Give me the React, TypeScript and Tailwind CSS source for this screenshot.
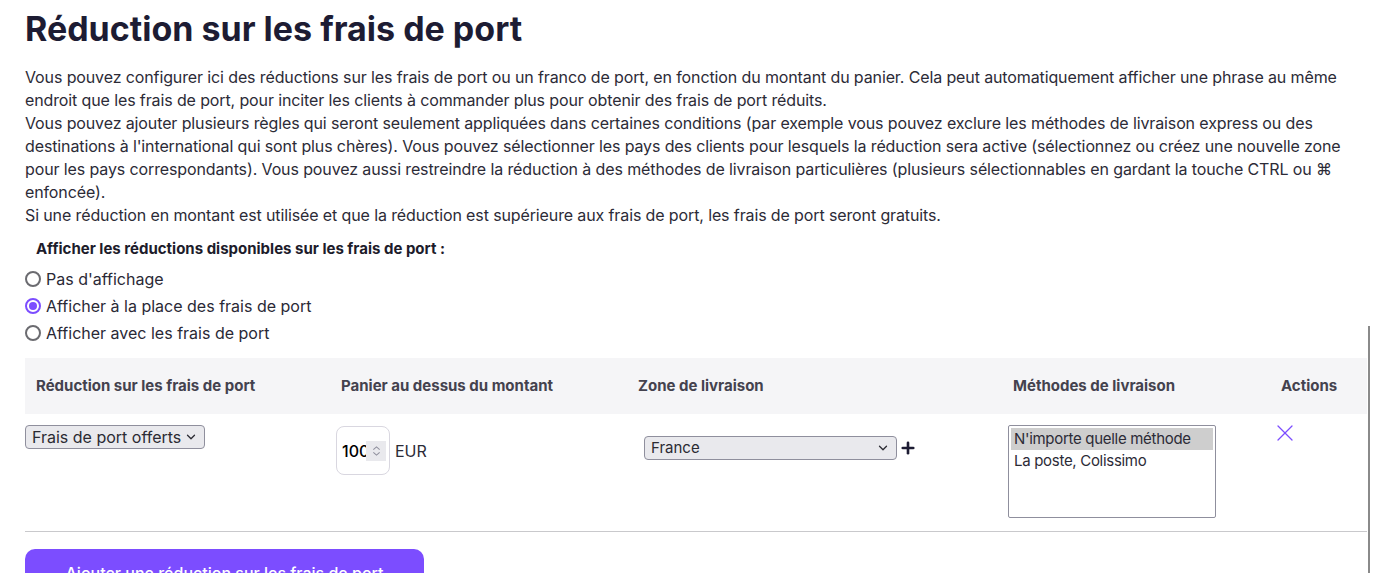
import { X, ChevronDown, Plus } from 'lucide-react';

const fontStack = { fontFamily: 'Inter, "Noto Sans", sans-serif' };

function FakeSelect({ label, className }: { label: string; className: string }) {
  return (
    <div
      className={`flex items-center justify-between bg-[#e9e9ed] border border-[#8f8f9d] rounded-[4px] text-[#2b2b33] ${className}`}
    >
      <span className="truncate">{label}</span>
      <ChevronDown className="w-3.5 h-3.5 shrink-0" strokeWidth={2.2} />
    </div>
  );
}

function Radio({ label, checked }: { label: string; checked?: boolean }) {
  return (
    <label className="flex items-center h-[27px] gap-[5px] text-[16px] text-[#2a2936]">
      <span
        className={`w-[16px] h-[16px] rounded-full border-2 flex items-center justify-center ${
          checked ? 'border-[#7c4dff]' : 'border-[#6b6b70]'
        }`}
      >
        {checked && <span className="w-[8px] h-[8px] rounded-full bg-[#7c4dff]" />}
      </span>
      {label}
    </label>
  );
}

export default function App() {
  return (
    <div className="bg-white min-h-[573px] px-[25px] overflow-hidden" style={fontStack}>
      <h1 className="pt-[6px] text-[34px] leading-[46px] font-bold text-[#1d1c33]">
        Réduction sur les frais de port
      </h1>

      <p className="mt-[14px] text-[16px] leading-[23px] text-[#2c2b37] tracking-[-0.12px]">
        Vous pouvez configurer ici des réductions sur les frais de port ou un franco de port, en fonction du
        montant du panier. Cela peut automatiquement afficher une phrase au même endroit que les frais de port,
        pour inciter les clients à commander plus pour obtenir des frais de port réduits.
        <br />
        Vous pouvez ajouter plusieurs règles qui seront seulement appliquées dans certaines conditions (par
        exemple vous pouvez exclure les méthodes de livraison express ou des destinations à l'international qui
        sont plus chères). Vous pouvez sélectionner les pays des clients pour lesquels la réduction sera active
        (sélectionnez ou créez une nouvelle zone pour les pays correspondants). Vous pouvez aussi restreindre la
        réduction à des méthodes de livraison particulières (plusieurs sélectionnables en gardant la touche CTRL
        ou ⌘ enfoncée).
        <br />
        Si une réduction en montant est utilisée et que la réduction est supérieure aux frais de port, les frais
        de port seront gratuits.
      </p>

      <div className="mt-[12px] pl-[11px] text-[15px] leading-[20px] font-bold text-[#1d1c2b]">
        Afficher les réductions disponibles sur les frais de port :
      </div>

      <div className="mt-[6px]">
        <Radio label="Pas d'affichage" />
        <Radio label="Afficher à la place des frais de port" checked />
        <Radio label="Afficher avec les frais de port" />
      </div>

      <div className="relative mt-[12px] mr-[4px]">
        {/* bordure de défilement */}
        <div className="absolute right-[-3px] top-[-32px] bottom-[-200px] w-[2px] bg-[#8a8a8a]" />

        <div className="grid grid-cols-[305px_297px_375px_268px_1fr] h-[56px] items-center bg-[#f5f5f7] text-[15px] font-bold text-[#44424e]">
          <div className="pl-[11px]">Réduction sur les frais de port</div>
          <div className="pl-[11px]">Panier au dessus du montant</div>
          <div className="pl-[11px]">Zone de livraison</div>
          <div className="pl-[11px]">Méthodes de livraison</div>
          <div className="pl-[11px]">Actions</div>
        </div>

        <div className="grid grid-cols-[305px_297px_375px_268px_1fr] items-start h-[118px] border-b border-[#c9c9cc] text-[16px] text-[#2c2b37]">
          <div className="pt-[11px]">
            <FakeSelect label="Frais de port offerts" className="w-[180px] h-[24px] px-[6px] text-[16px]" />
          </div>
          <div className="pt-[12px] pl-[6px] flex items-center gap-[5px]">
            <div className="w-[54px] h-[49px] rounded-[8px] border border-[#d9d7e0] flex items-center pl-[5px] overflow-hidden">
              <span className="font-medium text-black w-[24px] overflow-hidden whitespace-nowrap">100</span>
              <span className="flex flex-col items-center justify-center w-[20px] h-[20px] bg-[#e9e9ed] text-[#8f8f9d]">
                <svg viewBox="0 0 10 12" className="w-[9px] h-[12px]" fill="none" stroke="currentColor" strokeWidth="1.2">
                  <path d="M1.5 4.5 L5 1.5 L8.5 4.5" />
                  <path d="M1.5 7.5 L5 10.5 L8.5 7.5" />
                </svg>
              </span>
            </div>
            <span>EUR</span>
          </div>
          <div className="pt-[22px] pl-[17px] flex items-center">
            <FakeSelect label="France" className="w-[253px] h-[24px] px-[6px] text-[15px]" />
            <Plus className="w-[18px] h-[18px] ml-[2px] text-[#1d1c33]" strokeWidth={3.5} />
          </div>
          <div className="pt-[11px] pl-[6px]">
            <div className="w-[208px] h-[93px] border border-[#8f8f9d] rounded-[2px] text-[15px] leading-[22px] p-[2px] tracking-[-0.3px]">
              <div className="bg-[#cecece] px-[3px] whitespace-nowrap">N'importe quelle méthode</div>
              <div className="px-[3px] whitespace-nowrap">La poste, Colissimo</div>
            </div>
          </div>
          <div className="pt-[5px] pl-[1px]">
            <X className="w-[28px] h-[28px] text-[#7c4dff]" strokeWidth={1.1} />
          </div>
        </div>
      </div>

      <button className="mt-[17px] w-[399px] h-[48px] rounded-[10px] bg-[#7c4dff] text-white text-[16px] font-medium">
        Ajouter une réduction sur les frais de port
      </button>
    </div>
  );
}
